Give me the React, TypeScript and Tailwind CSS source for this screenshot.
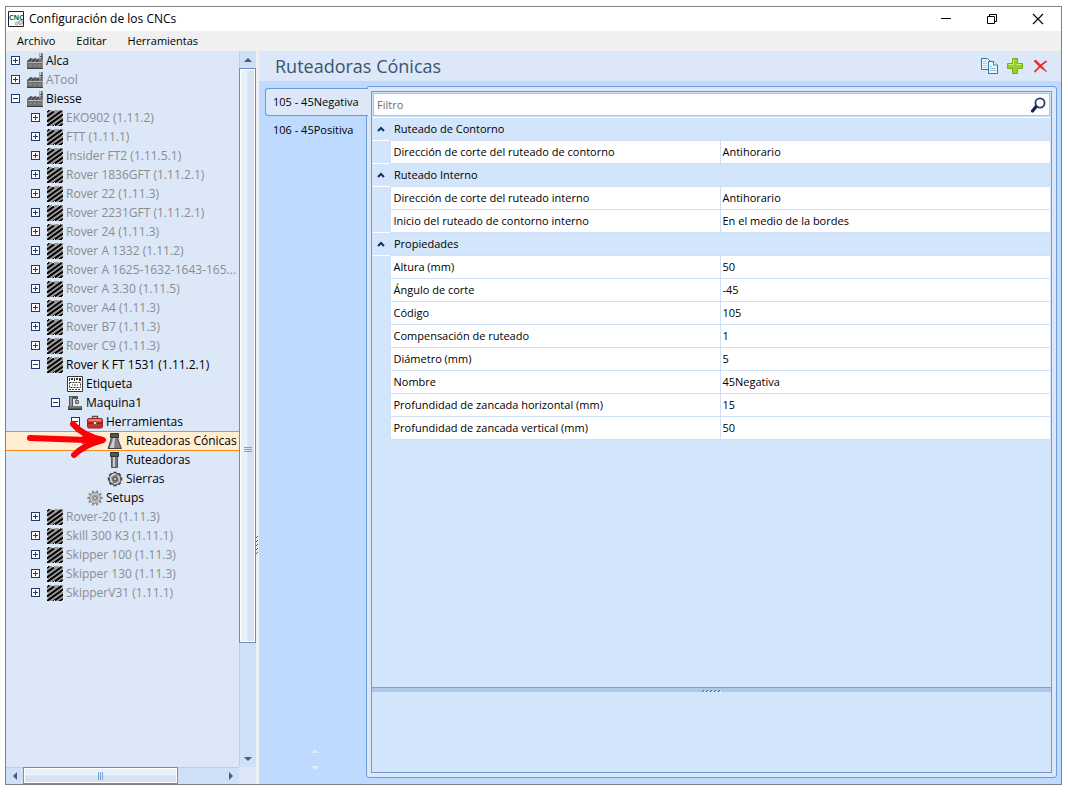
import React from "react";

type IconName = "factory" | "biesse" | "label" | "machine" | "toolbox" | "conic" | "router" | "saw" | "gear";
type Node = { level: number; text: string; icon: IconName; open?: boolean; leaf?: boolean; dim?: boolean; selected?: boolean };

const nodes: Node[] = [
  { level: 0, text: "Alca", icon: "factory" },
  { level: 0, text: "ATool", icon: "factory", dim: true },
  { level: 0, text: "Biesse", icon: "factory", open: true },
  { level: 1, text: "EKO902 (1.11.2)", icon: "biesse", dim: true },
  { level: 1, text: "FTT (1.11.1)", icon: "biesse", dim: true },
  { level: 1, text: "Insider FT2 (1.11.5.1)", icon: "biesse", dim: true },
  { level: 1, text: "Rover 1836GFT (1.11.2.1)", icon: "biesse", dim: true },
  { level: 1, text: "Rover 22 (1.11.3)", icon: "biesse", dim: true },
  { level: 1, text: "Rover 2231GFT (1.11.2.1)", icon: "biesse", dim: true },
  { level: 1, text: "Rover 24 (1.11.3)", icon: "biesse", dim: true },
  { level: 1, text: "Rover A 1332 (1.11.2)", icon: "biesse", dim: true },
  { level: 1, text: "Rover A 1625-1632-1643-165...", icon: "biesse", dim: true },
  { level: 1, text: "Rover A 3.30 (1.11.5)", icon: "biesse", dim: true },
  { level: 1, text: "Rover A4 (1.11.3)", icon: "biesse", dim: true },
  { level: 1, text: "Rover B7 (1.11.3)", icon: "biesse", dim: true },
  { level: 1, text: "Rover C9 (1.11.3)", icon: "biesse", dim: true },
  { level: 1, text: "Rover K FT 1531 (1.11.2.1)", icon: "biesse", open: true },
  { level: 2, text: "Etiqueta", icon: "label", leaf: true },
  { level: 2, text: "Maquina1", icon: "machine", open: true },
  { level: 3, text: "Herramientas", icon: "toolbox", open: true },
  { level: 4, text: "Ruteadoras Cónicas", icon: "conic", leaf: true, selected: true },
  { level: 4, text: "Ruteadoras", icon: "router", leaf: true },
  { level: 4, text: "Sierras", icon: "saw", leaf: true },
  { level: 3, text: "Setups", icon: "gear", leaf: true },
  { level: 1, text: "Rover-20 (1.11.3)", icon: "biesse", dim: true },
  { level: 1, text: "Skill 300 K3 (1.11.1)", icon: "biesse", dim: true },
  { level: 1, text: "Skipper 100 (1.11.3)", icon: "biesse", dim: true },
  { level: 1, text: "Skipper 130 (1.11.3)", icon: "biesse", dim: true },
  { level: 1, text: "SkipperV31 (1.11.1)", icon: "biesse", dim: true },
];

const indents = ["pl-[5px]", "pl-[25px]", "pl-[45px]", "pl-[65px]", "pl-[85px]"];

const groups = [
  { title: "Ruteado de Contorno", rows: [["Dirección de corte del ruteado de contorno", "Antihorario"]] },
  {
    title: "Ruteado Interno",
    rows: [
      ["Dirección de corte del ruteado interno", "Antihorario"],
      ["Inicio del ruteado de contorno interno", "En el medio de la bordes"],
    ],
  },
  {
    title: "Propiedades",
    rows: [
      ["Altura (mm)", "50"],
      ["Ángulo de corte", "-45"],
      ["Código", "105"],
      ["Compensación de ruteado", "1"],
      ["Diámetro (mm)", "5"],
      ["Nombre", "45Negativa"],
      ["Profundidad de zancada horizontal (mm)", "15"],
      ["Profundidad de zancada vertical (mm)", "50"],
    ],
  },
];

function Teeth({ r1, r2, n, w, color }: { r1: number; r2: number; n: number; w: number; color: string }) {
  return (
    <g stroke={color} strokeWidth={w}>
      {Array.from({ length: n }, (_, i) => {
        const a = (i * 2 * Math.PI) / n;
        return <line key={i} x1={8 + r1 * Math.cos(a)} y1={8 + r1 * Math.sin(a)} x2={8 + r2 * Math.cos(a)} y2={8 + r2 * Math.sin(a)} />;
      })}
    </g>
  );
}

function TreeIcon({ name }: { name: IconName }) {
  return (
    <svg className="size-4 shrink-0" viewBox="0 0 16 16" aria-hidden="true">
      {name === "factory" && (
        <>
          <path d="M12.500 7V0h3.200v15.500H0V8L3.500 5h2v1.500L8 5h1.500v1.500L11 5.500Z" fill="#6f6f6f" />
          <path d="M13.500 0v7" stroke="#d0d0d0" />
          <path d="M13 3.500h3M13 6h3" stroke="#555" />
          <path d="M1 8.500l3-2.500M5 8.500l3-2.500M9 8.500l3-2.500" stroke="#3f3f3f" strokeWidth="1.200" />
          <path d="M1 9.500h14" stroke="#b4b4b4" />
          <path d="M2 11.500h3v2H2zM6.500 11.500h3v2h-3zM11 11.500h3v2h-3z" fill="#888" />
          <path d="M0 15.500h16" stroke="#3f3f3f" fill="none" />
        </>
      )}
      {name === "biesse" && (
        <>
          <path d="M0 0h16v16H0z" fill="#9c9c9c" />
          <path d="M0 6.500L7 1.500M0 11.500L14.500 1M0 16L16 4.500M6 16.500L16 9.500M12 16.500L16 14M0 2L2 0" stroke="#000" strokeWidth="2" />
          <path d="M0 0h1v1H0zM5 0h2v1H5zM12 0h1v1h-1zM0 8h1v1H0zM15 6h1v1h-1zM15 15h1v1h-1zM0 13h1v1H0zM7 15h1v1H7z" fill="#e8edf5" />
        </>
      )}
      {name === "label" && (
        <>
          <path d="M.5.5h15v15H.5z" fill="#fff" stroke="#333" />
          <path d="M2 2h1v3H2zM4 2h2v2H4zM7 2h1v3H7zM9 2h2v2H9zM12 2h2v3h-2z" fill="#333" />
          <path d="M2.500 6.500h11v5h-11z" fill="none" stroke="#333" strokeDasharray="2 1" />
          <path d="M5 9h1M7 9h2M10 9h1" stroke="#333" />
          <path d="M2 13.500h12" stroke="#e00000" strokeDasharray="2 1" />
        </>
      )}
      {name === "machine" && (
        <>
          <path d="M2 1h9v3H6v7H2z" fill="#555" />
          <path d="M3 2h2v9H3z" fill="#999" />
          <path d="M9.500 3v3M8.500 5.500h3v3h-3z" stroke="#666" fill="#aaa" />
          <path d="M1 11h14v3H1z" fill="#555" />
          <path d="M2 12h12" stroke="#999" />
          <path d="M1 14h14v1H1z" fill="#333" />
        </>
      )}
      {name === "toolbox" && (
        <>
          <path d="M5.500 5V2.500h5V5" fill="none" stroke="#555" strokeWidth="1.500" />
          <rect x=".5" y="4.500" width="15" height="9.500" rx="1.500" fill="#cf2b2b" stroke="#9e2020" />
          <path d="M1.500 5h13v2.500h-13z" fill="#ee7c74" />
          <path d="M1 9h14" stroke="#7d1414" />
          <path d="M6.500 7.500h3v3h-3z" fill="#ddd" stroke="#666" />
        </>
      )}
      {name === "conic" && (
        <>
          <path d="M4.500 4h6l1 4 3 7.500H1L3.500 8Z" fill="#808080" stroke="#444" />
          <path d="M6 5h2l-1 10H3L5.500 8Z" fill="#d0d0d0" />
          <path d="M3.500.5h8v4h-8z" fill="#555" stroke="#333" />
        </>
      )}
      {name === "router" && (
        <>
          <path d="M4.500 4.500h6v11h-6z" fill="#777" stroke="#555" />
          <path d="M6 5h2v10H6z" fill="#ccc" />
          <path d="M3.500.5h8v4h-8z" fill="#555" stroke="#333" />
        </>
      )}
      {name === "saw" && (
        <>
          <Teeth r1={5.5} r2={7.3} n={8} w={3} color="#444" />
          <circle cx="8" cy="8" r="6" fill="#8a8a8a" stroke="#444" />
          <path d="M3 7Q5 3 9 3M13 9Q11 13 7 13M10.500 4.500Q13 6 12 9M5.500 11.500Q3 10 4 7" stroke="#d6d6d6" strokeWidth="1.300" fill="none" />
          <circle cx="8" cy="8" r="2" fill="#eee" stroke="#333" />
          <path d="M8 7.500v1" stroke="#333" />
        </>
      )}
      {name === "gear" && (
        <>
          <Teeth r1={5} r2={7.6} n={10} w={2.2} color="#8c8c8c" />
          <circle cx="8" cy="8" r="5.400" fill="#ccc" stroke="#8c8c8c" />
          <circle cx="8" cy="8" r="3" fill="#b4b4b4" stroke="#999" />
          <circle cx="8" cy="8" r="1.500" fill="#eee" stroke="#777" />
        </>
      )}
    </svg>
  );
}

function Expander({ open }: { open?: boolean }) {
  return (
    <button aria-label={open ? "Contraer" : "Expandir"} className="size-[10px] shrink-0">
      <svg className="block size-full" viewBox="0 0 10 10">
        <rect x=".5" y=".5" width="8" height="8" fill="#fff" stroke="#1f3b73" />
        <path d={open ? "M2 4.5h5" : "M2 4.5h5M4.500 2v5"} stroke="#1f3b73" />
      </svg>
    </button>
  );
}

function Tri({ dir, color = "#4a5a7c" }: { dir: "up" | "down" | "left" | "right"; color?: string }) {
  const d = { up: "M4 2L8 6H0Z", down: "M0 2H8L4 6Z", left: "M2 4L6 0V8Z", right: "M6 4L2 0V8Z" }[dir];
  return (
    <svg className="block size-2" viewBox="0 0 8 8" aria-hidden="true">
      <path d={d} fill={color} />
    </svg>
  );
}

function TreePanel() {
  return (
    <aside className="flex w-[250px] shrink-0 flex-col bg-[#dce8f7]">
      <div className="flex min-h-0 flex-1">
        <ul className="relative min-w-0 flex-1">
          {nodes.map((n) => (
            <li
              key={n.text}
              className={`flex items-center ${indents[n.level]} ${
                n.selected ? "-mb-px h-5 border-y border-[#f78b1e] bg-[#ffeed0]" : "h-[19px]"
              }`}
            >
              {n.leaf ? <span className="w-[10px] shrink-0" /> : <Expander open={n.open} />}
              <button className={`ml-[6px] flex min-w-0 items-center gap-[3px] ${n.dim ? "text-[#8b8d90]" : "text-black"}`}>
                <TreeIcon name={n.icon} />
                <span className="whitespace-nowrap leading-[18px]">{n.text}</span>
              </button>
            </li>
          ))}
          <svg className="absolute top-[369px] left-5 h-[40px] w-[82px]" viewBox="0 0 82 40" aria-hidden="true">
            <path d="M4 18L60 20" stroke="#fb0007" strokeWidth="6" strokeLinecap="round" fill="none" />
            <path d="M56 16L81 20L56 24Z" fill="#fb0007" />
            <path d="M47 4Q57 16 77 20Q58 25 48 35" stroke="#fb0007" strokeWidth="6" strokeLinecap="round" strokeLinejoin="round" fill="none" />
          </svg>
        </ul>
        <div className="flex w-[17px] flex-col border-l border-[#bccfe8] bg-[#cfdff5]">
          <button aria-label="Subir" className="flex h-[17px] items-center justify-center">
            <Tri dir="up" />
          </button>
          <div className="-ml-px flex flex-[575_1_0%] flex-col items-center border border-[#6d8fc0] bg-linear-to-r from-[#e9f1fc] from-45% to-[#d5e3f5] to-55% shadow-[inset_0_0_0_1px_white]">
            <div className="flex-[2_1_0%]" />
            <svg className="h-2 w-2" viewBox="0 0 8 8" aria-hidden="true">
              <path d="M0 1.500h8M0 3.500h8M0 5.500h8" stroke="#7c9fd0" />
            </svg>
            <div className="flex-1" />
          </div>
          <div className="flex-[107_1_0%]" />
          <button aria-label="Bajar" className="flex h-[17px] items-center justify-center">
            <Tri dir="down" />
          </button>
        </div>
      </div>
      <div className="flex h-[17px]">
        <div className="flex flex-1 border-t border-[#bccfe8] bg-[#cfdff5]">
          <button aria-label="Izquierda" className="flex w-[17px] items-center justify-center">
            <Tri dir="left" />
          </button>
          <div className="-mt-px flex flex-[155_1_0%] items-center justify-center border border-[#6d8fc0] bg-linear-to-b from-[#e9f1fc] from-45% to-[#d5e3f5] to-55% shadow-[inset_0_0_0_1px_white]">
            <svg className="h-2 w-2" viewBox="0 0 8 8" aria-hidden="true">
              <path d="M1.500 0v8M3.500 0v8M5.500 0v8" stroke="#7c9fd0" />
            </svg>
          </div>
          <div className="flex-[44_1_0%]" />
          <button aria-label="Derecha" className="flex w-[17px] items-center justify-center">
            <Tri dir="right" />
          </button>
        </div>
        <div className="w-[17px]" />
      </div>
    </aside>
  );
}

function PropertyTable() {
  return (
    <table className="w-full table-fixed border-collapse text-[11px] leading-[14px]">
      <colgroup>
        <col className="w-[17px]" />
        <col />
        <col />
      </colgroup>
      {groups.map((g) => (
        <tbody key={g.title}>
          <tr className="h-[23px] border-y border-white bg-[#d3e5fb]">
            <th scope="colgroup" colSpan={3} className="p-0 text-left font-normal">
              <button className="flex items-center">
                <svg className="ml-1 h-[6px] w-[8px]" viewBox="0 0 8 6" aria-hidden="true">
                  <path d="M1 5L4 2L7 5" stroke="#12306a" strokeWidth="2" fill="none" />
                </svg>
                <span className="ml-[9px]">{g.title}</span>
              </button>
            </th>
          </tr>
          {g.rows.map(([k, v]) => (
            <tr key={k} className="h-[23px]">
              <td className="bg-[#d3e5fb] p-0" />
              <th scope="row" className="border border-[#cfdff5] bg-white p-0 pl-[3px] text-left font-normal whitespace-nowrap">
                {k}
              </th>
              <td className="border border-r-0 border-[#cfdff5] bg-white p-0 pl-[2px]">{v}</td>
            </tr>
          ))}
        </tbody>
      ))}
    </table>
  );
}

function MainPanel() {
  return (
    <main className="flex min-w-0 flex-1 flex-col bg-[#bedaff]">
      <header className="flex h-[30px] items-center bg-[#dce8f7] pr-[13px] pl-4">
        <h1 className="flex-1 text-[18px] leading-[28px] text-[#3b5470]">Ruteadoras Cónicas</h1>
        <div className="flex gap-[9px]">
          <button aria-label="Duplicar">
            <svg className="block h-4 w-[17px]" viewBox="0 0 17 16">
              <path d="M.5.5h6l3 3v8h-9z" fill="#eaf6fd" stroke="#2d7aa3" />
              <path d="M2 3.500h3M2 5.500h4M2 7.500h4M2 9.500h4" stroke="#a5d5ee" />
              <path d="M7.500 3.500h5l4 3.500v8.500h-9z" fill="#eaf6fd" stroke="#2d7aa3" />
              <path d="M12.500 3.500V7h4" fill="#fff" stroke="#2d7aa3" />
              <path d="M9 8.500h2M9 10.500h6M9 12.500h6" stroke="#8fc9e8" />
            </svg>
          </button>
          <button aria-label="Agregar">
            <svg className="block size-4" viewBox="0 0 16 16">
              <path d="M5.500.5h5v5h5v5h-5v5h-5v-5h-5v-5h5z" fill="#9ad023" stroke="#73ad1c" />
              <path d="M6.500 1.500v5h-5M9.500 6.500h5" stroke="#cdec7c" fill="none" />
            </svg>
          </button>
          <button aria-label="Eliminar">
            <svg className="block size-4" viewBox="0 0 16 16">
              <path d="M2 3L4 2.500Q9 7 14.500 13.500Q8 10 2 3Z" fill="#ee2b2b" stroke="#ee2b2b" />
              <path d="M14 3.500Q8 7 3 13.500" stroke="#ee2b2b" strokeWidth="1.800" fill="none" strokeLinecap="round" />
            </svg>
          </button>
        </div>
      </header>
      <div className="flex min-h-0 flex-1 pt-[5px] pr-1 pb-[6px] pl-[6px] text-[11px]">
        <div className="z-10 flex w-[102px] flex-col pt-[2px]">
          <div role="tablist" className="-mr-px flex flex-1 flex-col">
            <button role="tab" aria-selected="true" className="h-7 rounded-l-[3px] border border-r-0 border-[#6f9bd8] bg-[#dce8f7] pl-[7px] text-left whitespace-nowrap">
              105 - 45Negativa
            </button>
            <button role="tab" aria-selected="false" className="h-7 pl-2 text-left whitespace-nowrap">
              106 - 45Positiva
            </button>
          </div>
          <div className="flex flex-col items-center gap-[9px] pr-[2px] pb-[6px]">
            <button aria-label="Ficha anterior">
              <Tri dir="up" color="#dfeafb" />
            </button>
            <button aria-label="Ficha siguiente">
              <Tri dir="down" color="#dfeafb" />
            </button>
          </div>
        </div>
        <section className="-ml-px flex min-w-0 flex-1 rounded-[3px] border border-[#6f9bd8] bg-[#dce8f7] p-1">
          <div className="flex min-w-0 flex-1 flex-col border border-[#6f9bd8] bg-[#d3e5fb]">
            <div className="flex flex-1 flex-col gap-px px-px pt-px">
              <div className="flex h-[23px] items-stretch border border-[#a3c3ee] bg-white pr-[3px]">
                <input
                  aria-label="Filtro"
                  placeholder="Filtro"
                  className="min-w-0 flex-1 pl-[3px] text-[11px] leading-[20px] outline-none placeholder:text-[#6d6d6d]"
                />
                <svg className="size-4 self-center" viewBox="0 0 16 16" aria-hidden="true">
                  <circle cx="10" cy="6" r="4.600" fill="#fff" stroke="#24406f" strokeWidth="1.800" />
                  <path d="M6 9.800L2.500 14" stroke="#10264f" strokeWidth="3.200" strokeLinecap="round" />
                </svg>
              </div>
              <PropertyTable />
            </div>
            <div className="flex h-[5px] items-center justify-center border-t border-[#7c9fd0] bg-[#b0c8e8]">
              <svg className="h-[3px] w-[19px]" viewBox="0 0 19 3" aria-hidden="true">
                <path d="M0 3l2-2M4 3l2-2M8 3l2-2M12 3l2-2M16 3l2-2" stroke="#2a62ba" />
                <path d="M2 3l1-1M6 3l1-1M10 3l1-1M14 3l1-1M18 3l1-1" stroke="#fff" />
              </svg>
            </div>
            <div className="h-20 bg-[#d3e5fb]" />
          </div>
        </section>
      </div>
    </main>
  );
}

export default function App() {
  return (
    <div className="flex h-screen flex-col bg-white pt-[6px] pr-[6px] pb-[9px] pl-[5px] font-['Open_Sans','Noto_Sans',sans-serif] text-[12px] text-black">
      <div className="flex min-h-0 flex-1 flex-col border border-[#808080] bg-white">
        <div className="flex h-6 items-center pl-[2px]">
          <svg className="size-4" viewBox="0 0 16 16" aria-hidden="true">
            <path d="M.5.5h15v15H.5z" fill="#fff" stroke="#222" />
            <text x="1" y="9" fontSize="7" fontWeight="bold" fill="#0b6b1d">
              CNC
            </text>
            <circle cx="8.500" cy="12.500" r="1.500" fill="#ddd" stroke="#aaa" />
            <circle cx="12.500" cy="11.500" r="2" fill="#ddd" stroke="#999" />
          </svg>
          <span className="ml-[5px] flex-1">Configuración de los CNCs</span>
          <div className="flex h-full">
            <button aria-label="Minimizar" className="flex w-[46px] items-center justify-center">
              <svg className="size-3" viewBox="0 0 12 12">
                <path d="M1 5.500h10" stroke="#000" />
              </svg>
            </button>
            <button aria-label="Restaurar" className="flex w-[46px] items-center justify-center">
              <svg className="size-3" viewBox="0 0 12 12">
                <path d="M1.500 3.500h7v7h-7zM3.500 3V1.500h7v7H9" stroke="#000" fill="none" />
              </svg>
            </button>
            <button aria-label="Cerrar" className="flex w-[46px] items-center justify-center">
              <svg className="size-3" viewBox="0 0 12 12">
                <path d="M1 1l10 10M11 1L1 11" stroke="#000" strokeWidth="1.100" />
              </svg>
            </button>
          </div>
        </div>
        <nav className="flex h-5 items-center gap-[21px] bg-[#f0f0f0] pl-[11px] text-[11px]">
          <button>Archivo</button>
          <button>Editar</button>
          <button>Herramientas</button>
        </nav>
        <div className="flex min-h-0 flex-1">
          <TreePanel />
          <div className="flex w-[3px] flex-col items-center bg-[#f0f0f0]">
            <div className="flex-[21_1_0%]" />
            <svg className="h-[19px] w-[3px]" viewBox="0 0 3 19" aria-hidden="true">
              <path d="M0 3l2-2M0 7l2-2M0 11l2-2M0 15l2-2M0 19l2-2" stroke="#2a62ba" />
            </svg>
            <div className="flex-[10_1_0%]" />
          </div>
          <MainPanel />
        </div>
      </div>
    </div>
  );
}
